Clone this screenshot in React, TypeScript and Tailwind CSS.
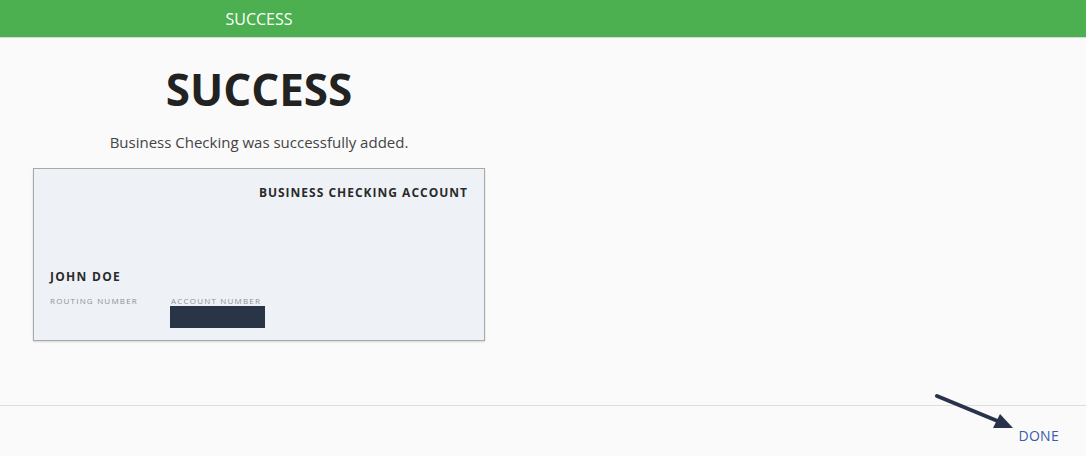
import React from "react";

export default function App() {
  const font = { fontFamily: '"Open Sans", "Liberation Sans", sans-serif' };
  return (
    <div className="relative w-[1086px] h-[456px] overflow-hidden bg-[#fafafa] flex flex-col" style={font}>
      <div className="h-[38px] bg-[#4caf50] border-b border-[#d8d8d8] flex">
        <div className="w-[518px] flex items-center justify-center text-white text-[16px] leading-[20px] pt-[1px]">
          SUCCESS
        </div>
      </div>
      <div className="h-[367px] flex flex-col">
        <div className="w-[518px] flex flex-col items-center">
          <h1 className="mt-[29px] text-[44px] leading-[44px] font-bold text-[#222]">SUCCESS</h1>
          <p className="mt-[21px] text-[15px] leading-[20px] text-[#444]">Business Checking was successfully added.</p>
          <div className="mt-[16px] w-[452px] h-[173px] bg-[#eef2f7] border border-[#a8a8a8] shadow-[0_1px_2px_rgba(0,0,0,0.15)] flex flex-col pt-[16px] pl-[16px] pr-[16px] pb-[12px]">
            <div className="self-end text-[12px] leading-[16px] font-bold tracking-[1px] text-[#2a2a2a]">
              BUSINESS CHECKING ACCOUNT
            </div>
            <div className="mt-auto text-[12px] leading-[16px] font-bold tracking-[1.3px] text-[#2a2a2a]">JOHN DOE</div>
            <div className="mt-[11px] flex">
              <div className="w-[120px] text-[8px] leading-[10px] tracking-[1.2px] text-[#8f8f8f]">ROUTING NUMBER</div>
              <div className="flex flex-col">
                <div className="pl-[1px] text-[8px] leading-[10px] tracking-[1.2px] text-[#8f8f8f]">ACCOUNT NUMBER</div>
                <div className="mt-[0px] w-[95px] h-[22px] bg-[#2a3447]"></div>
              </div>
            </div>
          </div>
        </div>
      </div>
      <div className="flex-1 border-t border-[#dedede] flex items-center justify-end pr-[27px] pt-[10px]">
        <span className="text-[14px] leading-[18px] text-[#3d5ba8] tracking-[0.3px]">DONE</span>
      </div>
      <svg className="absolute left-[930px] top-[388px]" width="90" height="48" viewBox="0 0 90 48">
        <line x1="7" y1="8" x2="70" y2="34" stroke="#28324a" strokeWidth="4" strokeLinecap="round" />
        <polygon points="83,40 63,40 70,26" fill="#28324a" />
      </svg>
    </div>
  );
}
